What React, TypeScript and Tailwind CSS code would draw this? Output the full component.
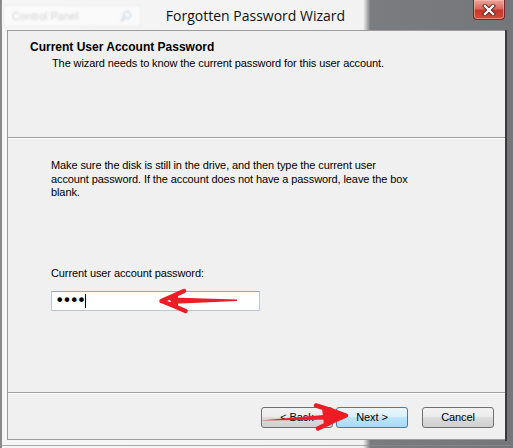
export default function App() {
  const font = "font-['Liberation_Sans',Arial,sans-serif]";
  return (
    <div
      className={`relative w-[513px] h-[448px] overflow-hidden flex flex-col bg-[linear-gradient(90deg,#f6f6f6_0%,#f2f2f2_70.8%,#7b7c80_72.2%,#75767a_100%)] ${font}`}
    >
      {/* left glass edge */}
      <div className="absolute left-0 top-0 h-full w-[2px] bg-[#8a8a8a]" />

      {/* title bar */}
      <div className="relative h-[30px] flex items-center justify-center shrink-0">
        <div className="absolute left-[3px] top-[5px] w-[138px] h-[22px] bg-white/50 border border-[#ececec] flex items-center justify-between px-[8px] blur-[0.8px]">
          <span className="text-[11px] text-[#d2d2d2]">Control Panel</span>
          <svg width="12" height="12" viewBox="0 0 12 12" className="opacity-30">
            <circle cx="7" cy="5" r="3.5" fill="none" stroke="#6c8fb8" strokeWidth="1.6" />
            <path d="M4.5 7.5 L1.5 10.5" stroke="#6c8fb8" strokeWidth="2" strokeLinecap="round" />
          </svg>
        </div>
        <span className="ml-[-2px] mt-[1px] text-[14px] text-[#111] font-['Open_Sans','Liberation_Sans',sans-serif]">
          Forgotten Password Wizard
        </span>
        <div className="absolute right-[8px] top-0 w-[32px] h-[20px] rounded-b-[4px] border border-t-0 border-[#6e2a24] bg-[linear-gradient(180deg,#e9a79b_0%,#d8695c_45%,#c7372a_55%,#cf4f3a_100%)] flex items-center justify-center shadow-[inset_0_0_0_1px_rgba(255,190,180,0.55)]">
          <svg width="14" height="12" viewBox="0 0 14 12">
            <path d="M3 2 L11 10 M11 2 L3 10" stroke="#5a1c16" strokeWidth="4.2" strokeLinecap="square" />
            <path d="M3 2 L11 10 M11 2 L3 10" stroke="#ffffff" strokeWidth="2.4" strokeLinecap="square" />
          </svg>
        </div>
      </div>

      {/* client area */}
      <div className="flex pl-[7px] shrink-0">
        <div className="w-[498px] h-[410px] bg-[#f0f0f0] border-l border-b border-t border-[#9c9c9c] flex flex-col text-[11px] text-black tracking-[-0.1px]">
          {/* header */}
          <div className="h-[106px] shrink-0 pl-[22px] pt-[9px]">
            <div className="font-bold text-[12px] leading-[14px] tracking-normal">Current User Account Password</div>
            <div className="pl-[22px] leading-[14px] mt-[2px]">
              The wizard needs to know the current password for this user account.
            </div>
          </div>
          <div className="h-[2px] border-t border-[#a0a0a0] border-b border-b-white" />

          {/* body */}
          <div className="flex-1 pl-[43px] pt-[20px]">
            <p className="leading-[13.5px]">
              Make sure the disk is still in the drive, and then type the current user
              <br />
              account password. If the account does not have a password, leave the box
              <br />
              blank.
            </p>
            <div className="mt-[66px] leading-[14px]">Current user account password:</div>
            <div className="mt-[11px] w-[209px] h-[20px] bg-white border border-[#b8c8d6] border-t-[#95a9ba] flex items-center pl-[3px]">
              <span className="text-[16px] leading-[16px] tracking-[-2.2px] font-['DejaVu_Sans',sans-serif]">••••</span>
              <span className="w-[1px] h-[14px] bg-black ml-[1px]" />
            </div>
          </div>

          <div className="h-[2px] border-t border-[#a0a0a0] border-b border-b-white" />

          {/* buttons */}
          <div className="h-[45px] shrink-0 flex items-start justify-end pt-[13px] pr-[11px]">
            <button className="w-[72px] h-[21px] rounded-[3px] border border-[#707070] bg-[linear-gradient(180deg,#f2f2f2_0%,#ebebeb_50%,#dddddd_50%,#cfcfcf_100%)] text-[11px] text-black">
              &lt; Back
            </button>
            <button className="ml-[3px] w-[72px] h-[21px] rounded-[3px] border border-[#3c7fb1] bg-[linear-gradient(180deg,#eaf6fd_0%,#d9f0fc_50%,#bee6fd_50%,#a7d9f5_100%)] text-[11px] text-black">
              Next &gt;
            </button>
            <button className="ml-[14px] w-[72px] h-[21px] rounded-[3px] border border-[#707070] bg-[linear-gradient(180deg,#f2f2f2_0%,#ebebeb_50%,#dddddd_50%,#cfcfcf_100%)] text-[11px] text-black">
              Cancel
            </button>
          </div>
        </div>
        <div className="w-[2px] h-[411px] bg-[#3a3a3a] mt-0" />
      </div>

      {/* bottom glass edge */}
      <div className="mt-[4px] h-[1px] bg-[#8a8a8a]/70 mx-[2px]" />

      {/* red annotation arrows */}
      <svg className="absolute left-0 top-0 pointer-events-none" width="513" height="448" viewBox="0 0 513 448">
        <path d="M237 299.6 L172 297.5 L170 304 L237 301 Z" fill="#ee1c24" />
        <path d="M184 291 Q173 296 161.5 301 Q173 305.5 185.5 311" fill="none" stroke="#ee1c24" strokeWidth="4.5" strokeLinecap="round" strokeLinejoin="round" />
        <path d="M168 298.5 L178 295 L178 307 Z" fill="#ee1c24" />
        <path d="M260 420.5 L335 414 L336 419.5 Z" fill="#ee1c24" />
        <path d="M316 405.5 Q331 410 346 415.5 Q333 421 318 428.5" fill="none" stroke="#ee1c24" strokeWidth="4.5" strokeLinecap="round" strokeLinejoin="round" />
        <path d="M322 408 L344 415.5 L324 425 Z" fill="#ee1c24" />
      </svg>
    </div>
  );
}
